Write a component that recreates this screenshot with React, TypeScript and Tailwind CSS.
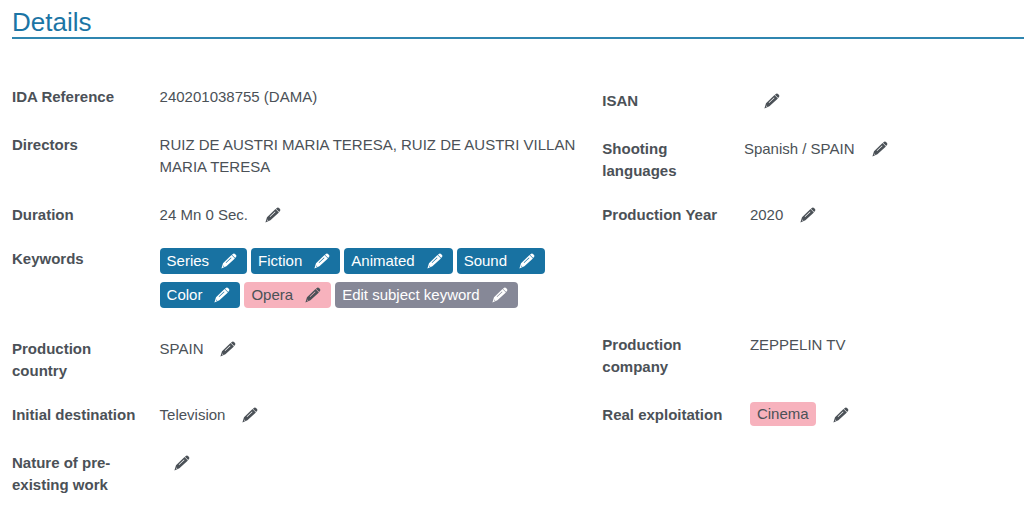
import React from 'react'
import clsx from 'clsx'

type EditButtonProps = {
  label: string
  className?: string
}

const EditButton = ({ label, className }: EditButtonProps) => {
  return (
    <button type="button" aria-label={`Edit ${label}`} className={clsx("shrink-0 cursor-pointer", className)}>
      <svg viewBox="0 0 16 16" className="block h-4 w-4" fill="currentColor">
        <path d="M10.9 1.7 12.2.7Q13.2.1 14 .9L15 2Q15.7 2.9 15.1 3.8L14.2 5.1Z" />
        <path
          fillRule="evenodd"
          d="M10.5 2 13.9 5.4 5.4 13.3.4 15.4 2 10.2ZM10 4.5 4.7 9.6 5.1 10 10.5 4.9ZM2.5 12.5 2.1 13.8 3.4 13.4Z"
        />
      </svg>
    </button>
  )
}

type TagProps = {
  text: string
  color: string
  editable?: boolean
}

const Tag = ({ text, color, editable = true }: TagProps) => {
  return (
    <li className={clsx("flex items-center rounded-sm", color, editable ? "h-[26px] pl-[7px] pr-[10px]" : "h-6 px-[7px]")}>
      {text}
      {editable && <EditButton label={text} className="ml-3" />}
    </li>
  )
}

type FieldProps = {
  label: string
  children?: React.ReactNode
  edit?: boolean
  wide?: boolean
  className?: string
}

const Field = ({ label, children, edit, wide, className }: FieldProps) => {
  return (
    <div className={clsx("flex items-start", className)}>
      <dt className={clsx("shrink-0 pr-6 font-bold", wide ? "w-[25%]" : "w-[35%]")}>{label}</dt>
      <dd className="flex min-w-0 flex-1 items-center pr-6">
        {children}
        {edit && <EditButton label={label} className={clsx("my-[3px]", children ? "ml-[17px]" : "ml-[14px]")} />}
      </dd>
    </div>
  )
}

const BLUE = "bg-[#1872a2] text-white"
const PINK = "bg-[#f7b2bd]"
const GRAY = "bg-[#868897] text-white"

const keywords = [
  { text: "Series", color: BLUE },
  { text: "Fiction", color: BLUE },
  { text: "Animated", color: BLUE },
  { text: "Sound", color: BLUE },
  { text: "Color", color: BLUE },
  { text: "Opera", color: PINK },
  { text: "Edit subject keyword", color: GRAY },
]

const Row = ({ children }: { children: React.ReactNode }) => {
  return <dl className="grid grid-cols-[7fr_5fr] items-start pb-[22px]">{children}</dl>
}

const App = () => {
  return (
    <main className="bg-white pl-3 font-['Liberation_Sans',Arial,sans-serif] text-[15px] leading-[22px] text-[#4b5157]">
      <h1 className="mb-[47px] border-b-2 border-[#2f86b0] pt-2 text-[26px] leading-[29px] text-[#1b75a5]">Details</h1>

      <Row>
        <Field wide label="IDA Reference">240201038755 (DAMA)</Field>
        <Field label="ISAN" edit className="pt-1" />
      </Row>
      <Row>
        <Field wide label="Directors">RUIZ DE AUSTRI MARIA TERESA, RUIZ DE AUSTRI VILLAN MARIA TERESA</Field>
        <Field label="Shooting languages" edit className="pt-1">
          <span className="-ml-1.5">Spanish / SPAIN</span>
        </Field>
      </Row>
      <Row>
        <Field wide label="Duration" edit>24 Mn 0 Sec.</Field>
        <Field label="Production Year" edit>2020</Field>
      </Row>
      <Row>
        <Field wide label="Keywords">
          <ul className="mb-1 flex flex-wrap gap-x-1 gap-y-2">
            {keywords.map((keyword) => (
              <Tag key={keyword.text} text={keyword.text} color={keyword.color} />
            ))}
          </ul>
        </Field>
      </Row>
      <Row>
        <Field wide label="Production country" edit className="pt-1">SPAIN</Field>
        <Field label="Production company">ZEPPELIN TV</Field>
      </Row>
      <Row>
        <Field wide label="Initial destination" edit>Television</Field>
        <Field label="Real exploitation" edit className="pb-0.5">
          <ul className="-mt-0.5">
            <Tag text="Cinema" color={PINK} editable={false} />
          </ul>
        </Field>
      </Row>
      <Row>
        <Field wide label="Nature of pre-existing work" edit className="pt-0.5" />
      </Row>
    </main>
  )
}

export default App
